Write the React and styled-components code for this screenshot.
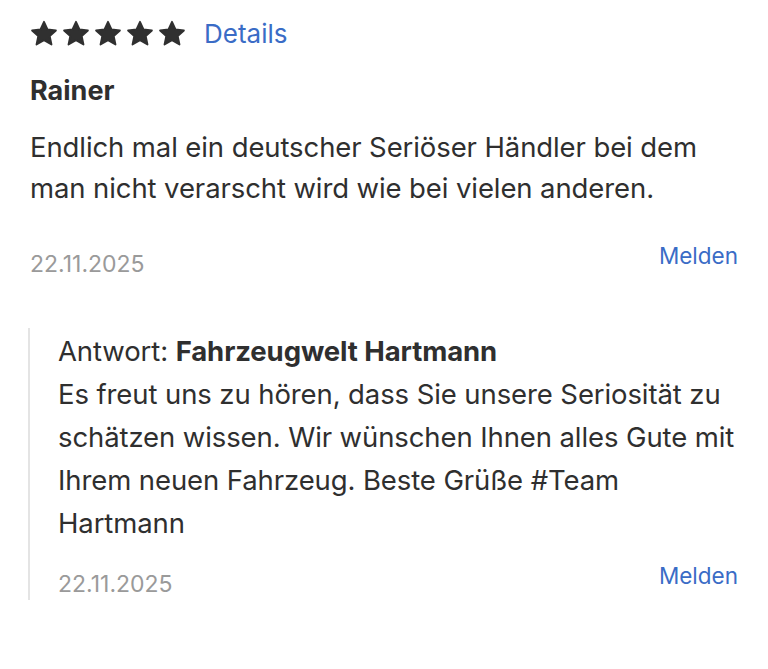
import styled, { createGlobalStyle } from "styled-components";

const GlobalStyle = createGlobalStyle`
  body {
    margin: 0;
    background: #ffffff;
    font-family: Inter, "Liberation Sans", sans-serif;
    color: #2f2f2f;
  }
`;

const Star = () => (
  <svg width="28" height="27" viewBox="0 0 24 23">
    <path
      d="M12 1.5l3.1 6.6 7.1.8-5.3 4.9 1.5 7.1L12 17.3l-6.4 3.6 1.5-7.1-5.3-4.9 7.1-.8z"
      fill="#303030"
      stroke="#303030"
      strokeWidth="1.6"
      strokeLinejoin="round"
    />
  </svg>
);

export default function App() {
  return (
    <Page>
      <GlobalStyle />
      <RatingRow>
        <Stars>
          {[0, 1, 2, 3, 4].map((i) => (
            <Star key={i} />
          ))}
        </Stars>
        <Link size="26px">Details</Link>
      </RatingRow>
      <Author>Rainer</Author>
      <Body>
        Endlich mal ein deutscher Seriöser Händler bei dem man nicht verarscht
        wird wie bei vielen anderen.
      </Body>
      <Footer>
        <DateText>22.11.2025</DateText>
        <Link size="22.5px">Melden</Link>
      </Footer>
      <Reply>
        <Body>
          Antwort: <strong>Fahrzeugwelt Hartmann</strong>
          <br />
          Es freut uns zu hören, dass Sie unsere Seriosität zu schätzen wissen.
          Wir wünschen Ihnen alles Gute mit Ihrem neuen Fahrzeug. Beste Grüße
          #Team Hartmann
        </Body>
        <Footer>
          <DateText>22.11.2025</DateText>
          <Link size="22.5px">Melden</Link>
        </Footer>
      </Reply>
    </Page>
  );
}

const Page = styled.div`
  padding: 13px 30px 40px 30px;
  width: 768px;
  box-sizing: border-box;
`;

const RatingRow = styled.div`
  display: flex;
  align-items: center;
  gap: 18px;
  height: 40px;
`;

const Stars = styled.div`
  display: flex;
  gap: 4px;
`;

const Link = styled.span`
  color: #3a6cc6;
  font-size: ${(p) => p.size};
`;

const Author = styled.div`
  font-weight: 700;
  font-size: 27px;
  margin-top: 21px;
`;

const Body = styled.p`
  margin: 20px 0 0 0;
  font-size: 27.5px;
  line-height: 41px;
  letter-spacing: -0.1px;

  strong {
    font-weight: 700;
  }
`;

const Footer = styled.div`
  display: flex;
  justify-content: space-between;
  align-items: flex-start;
  margin-top: 33px;
`;

const DateText = styled.span`
  color: #9a9a9a;
  font-size: 23px;
  margin-top: 8px;
`;

const Reply = styled.div`
  margin-top: 50px;
  border-left: 2px solid #e4e4e4;
  padding: 2px 0 2px 28px;
  margin-left: -2px;

  ${Body} {
    margin-top: 0;
    line-height: 43px;
  }

  ${Footer} {
    margin-top: 17px;
  }
`;
